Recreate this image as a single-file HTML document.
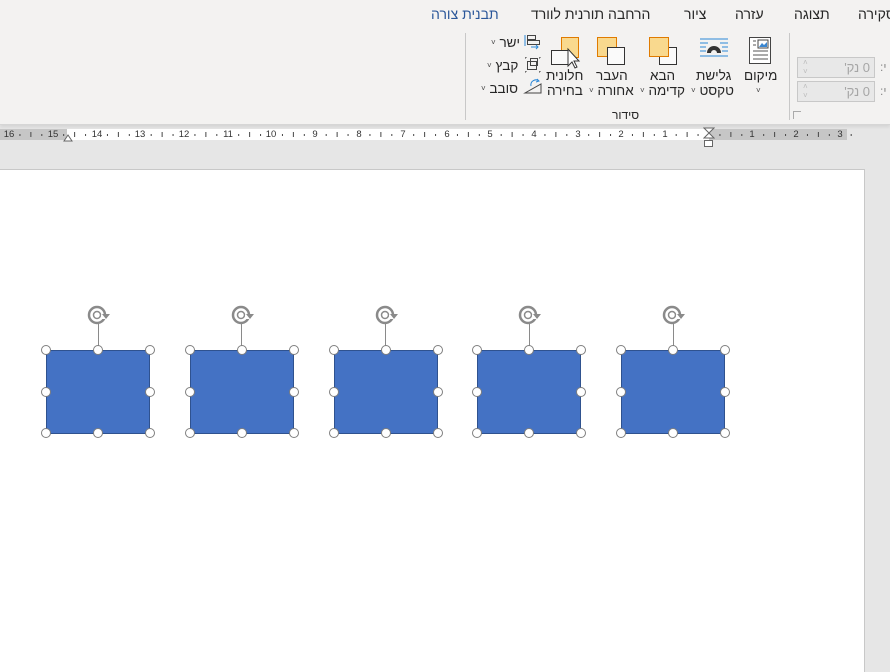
<!DOCTYPE html>
<html><head><meta charset="utf-8"><style>
*{margin:0;padding:0;box-sizing:border-box}
body{width:890px;height:672px;overflow:hidden;background:#e6e6e6;font-family:"Liberation Sans","Noto Sans CJK JP",sans-serif;position:relative;color:#262626}
.ab{position:absolute;white-space:nowrap}
.rib{position:absolute;left:0;top:0;width:890px;height:125px;background:#f3f2f1;border-bottom:1px solid #d6d6d6;box-shadow:0 2px 3px rgba(0,0,0,.08)}
.tab{font-size:14px;top:6px}
.lbl{font-size:13.5px;color:#262626}
.chev{font-size:8px;color:#444;vertical-align:2px}
.ruler{position:absolute;top:129px;height:11px;font-size:9px;color:#333;line-height:11px}
.num{position:absolute;top:0;font-size:9.5px;transform:translateX(-50%)}
.page{position:absolute;left:0;top:169px;width:865px;height:503px;background:#fff;border-right:1px solid #c8c8c8;border-top:1px solid #c8c8c8}
.shape{position:absolute;width:104px;height:84px;background:#4472c4;border:1.5px solid #2f528f}
.h{position:absolute;width:10px;height:10px;border-radius:50%;background:#fff;border:1.5px solid #7f7f7f}
.spin{position:absolute;width:78px;height:21px;border:1px solid #c8c8c8;background:#e8e8e8;font-size:13px;color:#a6a6a6;direction:rtl;text-align:right;padding-left:4px;padding-right:0;line-height:19px}
.spin span{position:absolute;right:4px;top:0}
</style></head><body>
<div class="rib">
  <div class="ab tab" style="left:431px;color:#2b579a">תבנית צורה</div>
  <div class="ab tab" style="left:531px">הרחבה תורנית לוורד</div>
  <div class="ab tab" style="left:684px">ציור</div>
  <div class="ab tab" style="left:735px">עזרה</div>
  <div class="ab tab" style="left:794px">תצוגה</div>
  <div class="ab tab" style="left:858px">סקירה</div>
  <div class="ab" style="left:465px;top:33px;width:1px;height:87px;background:#c8c8c8"></div>
  <div class="ab" style="left:789px;top:33px;width:1px;height:87px;background:#c8c8c8"></div>

  <svg class="ab" style="left:745px;top:36px" width="28" height="30"><rect x="4.5" y="1.5" width="21" height="26" fill="#fff" stroke="#444"/><rect x="13" y="4" width="10" height="8" fill="#fff" stroke="#444"/><path d="M14 11l3-4 2 2 3-3v5z" fill="#3a86d0"/><path d="M8 5h3M8 9h3M8 15h15M8 19h15M8 23h15" stroke="#555"/></svg>
  <svg class="ab" style="left:698px;top:38px" width="32" height="24"><path d="M2 1h28M2 5h8M22 5h8M2 9h6M24 9h6M2 13h6M24 13h6M2 18h28" stroke="#2b88d8"/><path d="M9 15a7 7 0 0 1 14 0h-4a3 3 0 0 0-6 0z" fill="#333"/></svg>
  <svg class="ab" style="left:648px;top:36px" width="32" height="32"><rect x="11.5" y="11.5" width="17" height="17" fill="#fafafa" stroke="#333"/><rect x="1.5" y="1.5" width="19" height="19" fill="#f9d98e" stroke="#e07b00"/></svg>
  <svg class="ab" style="left:596px;top:36px" width="32" height="32"><rect x="1.5" y="1.5" width="19" height="19" fill="#f9d98e" stroke="#e07b00"/><rect x="11.5" y="11.5" width="17" height="17" fill="#fafafa" stroke="#333"/></svg>
  <svg class="ab" style="left:549px;top:36px" width="36" height="34"><rect x="12.5" y="1.5" width="17" height="20" fill="#f9d98e" stroke="#e07b00"/><rect x="2.5" y="14.5" width="18" height="14" fill="#fafafa" stroke="#333"/><path d="M19 13v17l4-4 3 6 2-1-3-6h5z" fill="#fff" stroke="#333"/></svg>
  <svg class="ab" style="left:522px;top:34px" width="20" height="62"><rect x="5.5" y="1.5" width="8" height="4" fill="none" stroke="#444"/><rect x="5.5" y="6.5" width="12" height="4" fill="none" stroke="#444"/><path d="M3 1v11M9 13h7M14 11l2 2-2 2" stroke="#2b88d8" fill="none"/><g stroke="#444" fill="none"><rect x="5.5" y="27.5" width="9" height="8"/><rect x="8.5" y="24.5" width="7" height="7"/><path d="M3 24h2M3 38h2M17 24h2M17 38h2M4 23v2M4 37v2M18 23v2M18 37v2" stroke-dasharray="1 1"/></g><path d="M3 59h16V50z" fill="none" stroke="#444"/><path d="M9 52a5 5 0 0 1 8-5M15 45l2 2-3 1" stroke="#2b88d8" fill="none"/></svg>

  <div class="ab lbl" style="left:744px;top:68px">מיקום</div>
  <div class="ab lbl" style="left:756px;top:83px"><span class="chev">˅</span></div>
  <div class="ab lbl" style="left:696px;top:68px">גלישת</div>
  <div class="ab lbl" style="left:691px;top:83px"><span class="chev">˅</span> טקסט</div>
  <div class="ab lbl" style="left:650px;top:68px">הבא</div>
  <div class="ab lbl" style="left:640px;top:83px"><span class="chev">˅</span> קדימה</div>
  <div class="ab lbl" style="left:596px;top:68px">העבר</div>
  <div class="ab lbl" style="left:589px;top:83px"><span class="chev">˅</span> אחורה</div>
  <div class="ab lbl" style="left:546px;top:68px">חלונית</div>
  <div class="ab lbl" style="left:547px;top:83px">בחירה</div>
  <div class="ab lbl" style="left:491px;top:35px"><span class="chev">˅</span> ישר</div>
  <div class="ab lbl" style="left:487px;top:58px"><span class="chev">˅</span> קבץ</div>
  <div class="ab lbl" style="left:481px;top:81px"><span class="chev">˅</span> סובב</div>
  <div class="ab lbl" style="left:612px;top:108px;font-size:12px">סידור</div>

  <div class="spin" style="left:797px;top:57px"><span>0 נק'</span></div>
  <div class="spin" style="left:797px;top:81px"><span>0 נק'</span></div>
  <div class="ab" style="left:803px;top:58px;font-size:8px;color:#bbb;line-height:9px">˄<br>˅</div>
  <div class="ab" style="left:803px;top:82px;font-size:8px;color:#bbb;line-height:9px">˄<br>˅</div>
  <div class="ab" style="left:880px;top:60px;font-size:12px;color:#888">:י</div>
  <div class="ab" style="left:880px;top:84px;font-size:12px;color:#888">:י</div>
  <div class="ab" style="left:793px;top:111px;width:8px;height:8px;border:1px solid #aaa;border-width:1px 0 0 1px"></div>
</div>

<div class="ruler" style="left:0;width:67px;background:#c6c6c6"></div>
<div class="ruler" style="left:67px;width:642px;background:#fff"></div>
<div class="ruler" style="left:709px;width:138px;background:#c6c6c6"></div>
<div class="ruler" style="left:0;width:890px">
<span class="num" style="left:9px">16</span><span class="num" style="left:53px">15</span><span class="num" style="left:97px">14</span><span class="num" style="left:140px">13</span><span class="num" style="left:184px">12</span><span class="num" style="left:228px">11</span><span class="num" style="left:271px">10</span><span class="num" style="left:315px">9</span><span class="num" style="left:359px">8</span><span class="num" style="left:403px">7</span><span class="num" style="left:447px">6</span><span class="num" style="left:490px">5</span><span class="num" style="left:534px">4</span><span class="num" style="left:578px">3</span><span class="num" style="left:621px">2</span><span class="num" style="left:665px">1</span><span class="num" style="left:752px">1</span><span class="num" style="left:796px">2</span><span class="num" style="left:840px">3</span>
</div>
<svg class="ab" style="left:0;top:129px" width="890" height="20" id="tk"></svg>
<svg class="ab" style="left:63px;top:133px" width="10" height="9"><path d="M1 8l4-6 4 6z" fill="#fff" stroke="#666"/></svg>
<svg class="ab" style="left:703px;top:127px" width="12" height="22"><path d="M1 1h10L1 11h10z" fill="#fff" stroke="#666"/><rect x="1.5" y="13.5" width="8" height="6" fill="#fff" stroke="#666"/></svg>

<div class="page"></div>
<div id="shapes"></div>
<script>
var tk=document.getElementById('tk'),s='';
for(var n=-16;n<3.5;n+=0.25){var x=709+43.75*n;if(Math.abs(n%1)<0.01)continue;var half=Math.abs(n%1-0.5)<0.01||Math.abs(n%1+0.5)<0.01;s+='<line x1="'+x+'" x2="'+x+'" y1="'+(half?3:5)+'" y2="'+(half?8:7)+'" stroke="#444" stroke-width="1"/>';}
tk.innerHTML=s;
var h='';
for(var i=0;i<5;i++){var L=46+i*143.75,T=350;
h+='<div class="shape" style="left:'+L+'px;top:'+T+'px"></div>';
var cx=L+52;
h+='<div class="ab" style="left:'+(cx-0.5)+'px;top:323px;width:1px;height:27px;background:#8a8a8a"></div>';
h+='<svg class="ab" style="left:'+(cx-14)+'px;top:304px" width="28" height="22"><circle cx="13" cy="11" r="8" fill="none" stroke="#8a8a8a" stroke-width="2.5"/><circle cx="13" cy="11" r="3.5" fill="none" stroke="#8a8a8a" stroke-width="1.5"/><rect x="17" y="11" width="6" height="4" fill="#fff"/><path d="M18 10h8l-4 5z" fill="#8a8a8a"/></svg>';
var xs=[L,L+52,L+104],ys=[T,T+42,T+83];
for(var a=0;a<3;a++)for(var b=0;b<3;b++){if(a==1&&b==1)continue;h+='<div class="h" style="left:'+(xs[a]-5)+'px;top:'+(ys[b]-5)+'px"></div>';}
}
document.getElementById('shapes').innerHTML=h;
</script>
</body></html>
